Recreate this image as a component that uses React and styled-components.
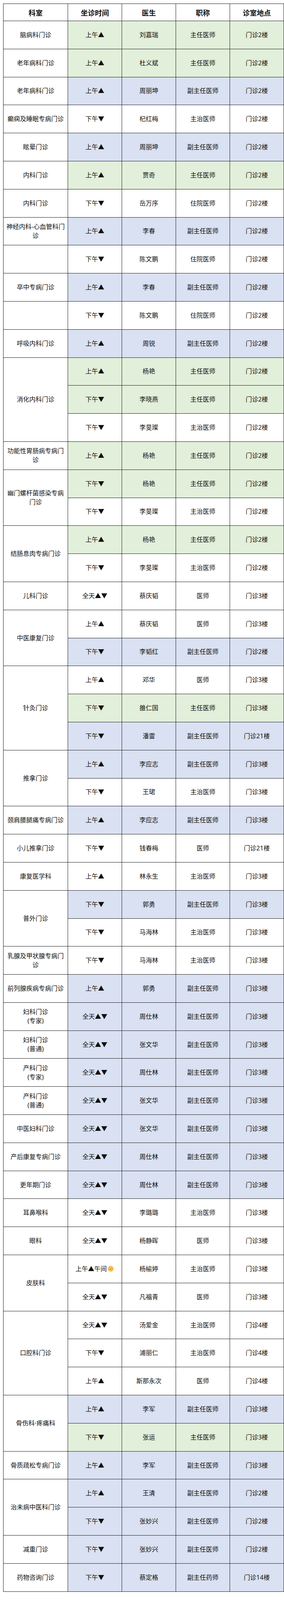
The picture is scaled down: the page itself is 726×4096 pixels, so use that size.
import React from 'react';
import styled, { createGlobalStyle } from 'styled-components';

const GlobalStyle = createGlobalStyle`
  html, body {
    margin: 0;
    padding: 0;
    background: #fff;
  }
  body {
    font-family: "Noto Sans", "Noto Sans CJK SC", sans-serif;
    color: #111;
  }
`;

const tones = {
  g: '#e2efda',
  b: '#d9e1f2',
  w: '#ffffff',
};

const Page = styled.div`
  padding: 9px 6px 0 8px;
`;

const Table = styled.table`
  width: 712px;
  border-collapse: collapse;
  table-layout: fixed;
  border: 1px solid #1c1c1c;
`;

const HeadRow = styled.tr`
  height: 44px;
`;

const Row = styled.tr`
  height: 71.8px;
`;

const HeadCell = styled.th`
  width: ${p => p.$w}px;
  padding: 0;
  border: 1px solid #1c1c1c;
  font-size: 18px;
  font-weight: 700;
  text-align: center;
  vertical-align: middle;
  background: #fff;
`;

const Cell = styled.td`
  padding: 0 3px;
  border: 1px solid #1c1c1c;
  background: ${p => tones[p.$tone || 'w']};
  font-size: 16px;
  line-height: 23px;
  text-align: center;
  vertical-align: middle;
  white-space: pre-line;
  color: #111;
`;

const TimeText = styled.span`
  display: inline-flex;
  align-items: center;
  white-space: nowrap;
`;

const SunFace = () => (
  <svg width="18" height="18" viewBox="0 0 36 36" style={{ marginLeft: 1 }}>
    <g fill="#f4900c">
      {Array.from({ length: 12 }).map((_, i) => (
        <polygon
          key={i}
          points="18,1 21,8 15,8"
          transform={`rotate(${i * 30} 18 18)`}
        />
      ))}
    </g>
    <circle cx="18" cy="18" r="11" fill="#ffcc4d" stroke="#f4900c" strokeWidth="1.2" />
    <circle cx="14.2" cy="16" r="1.4" fill="#664500" />
    <circle cx="21.8" cy="16" r="1.4" fill="#664500" />
    <path d="M13.5 20.5 Q18 25 22.5 20.5" stroke="#664500" strokeWidth="1.5" fill="none" />
  </svg>
);

const AM = '上午▲';
const PM = '下午▼';
const ALL = '全天▲▼';
const F2 = '门诊2楼';
const F3 = '门诊3楼';
const F4 = '门诊4楼';
const ZR = '主任医师';
const FZ = '副主任医师';
const ZZ = '主治医师';
const ZY = '住院医师';
const YS = '医师';

const groups = [
  ['脑病科门诊', [[AM, '刘嘉瑞', ZR, F2, 'g']]],
  ['老年病科门诊', [[AM, '杜义斌', ZR, F2, 'g']]],
  ['老年病科门诊', [[AM, '周丽坤', FZ, F2, 'b']]],
  ['癫痫及睡眠专病门诊', [[PM, '杞红梅', ZZ, F2, 'w']]],
  ['眩晕门诊', [[AM, '周丽坤', FZ, F2, 'b']]],
  ['内科门诊', [[AM, '贾奇', ZR, F2, 'g']]],
  ['内科门诊', [[PM, '岳万序', ZY, F2, 'w']]],
  ['神经内科-心血管科门诊', [[AM, '李春', FZ, F2, 'b']]],
  ['', [[PM, '陈文鹏', ZY, F2, 'w']]],
  ['卒中专病门诊', [[AM, '李春', FZ, F2, 'b']]],
  ['', [[PM, '陈文鹏', ZY, F2, 'w']]],
  ['呼吸内科门诊', [[AM, '周锐', FZ, F2, 'b']]],
  ['消化内科门诊', [
    [AM, '杨艳', ZR, F2, 'g'],
    [PM, '李晓燕', ZR, F2, 'g'],
    [PM, '李旻璨', ZZ, F2, 'w'],
  ]],
  ['功能性胃肠病专病门诊', [[AM, '杨艳', ZR, F2, 'g']]],
  ['幽门螺杆菌感染专病门诊', [
    [PM, '杨艳', ZR, F2, 'g'],
    [PM, '李旻璨', ZZ, F2, 'w'],
  ]],
  ['结肠息肉专病门诊', [
    [AM, '杨艳', ZR, F2, 'g'],
    [PM, '李旻璨', ZZ, F2, 'w'],
  ]],
  ['儿科门诊', [[ALL, '蔡庆韬', YS, F3, 'w']]],
  ['中医康复门诊', [
    [AM, '蔡庆韬', YS, F3, 'w'],
    [PM, '李韬红', FZ, F2, 'b'],
  ]],
  ['针灸门诊', [
    [AM, '邓华', YS, F3, 'w'],
    [PM, '雒仁国', ZR, F3, 'g'],
    [PM, '潘雷', FZ, '门诊21楼', 'b'],
  ]],
  ['推拿门诊', [
    [AM, '李应志', FZ, F3, 'b'],
    [PM, '王珺', ZZ, F3, 'w'],
  ]],
  ['颈肩腰腿痛专病门诊', [[AM, '李应志', FZ, F3, 'b']]],
  ['小儿推拿门诊', [[PM, '钱春梅', YS, '门诊21楼', 'w']]],
  ['康复医学科', [[AM, '林永生', ZZ, F3, 'w']]],
  ['普外门诊', [
    [PM, '郭勇', FZ, F3, 'b'],
    [PM, '马海林', ZZ, F3, 'w'],
  ]],
  ['乳腺及甲状腺专病门诊', [[PM, '马海林', ZZ, F3, 'w']]],
  ['前列腺疾病专病门诊', [[AM, '郭勇', FZ, F3, 'b']]],
  ['妇科门诊\n(专家)', [[ALL, '周仕林', FZ, F3, 'b']]],
  ['妇科门诊\n(普通)', [[ALL, '张文华', FZ, F3, 'b']]],
  ['产科门诊\n(专家)', [[ALL, '周仕林', FZ, F3, 'b']]],
  ['产科门诊\n(普通)', [[ALL, '张文华', FZ, F3, 'b']]],
  ['中医妇科门诊', [[ALL, '张文华', FZ, F3, 'b']]],
  ['产后康复专病门诊', [[ALL, '周仕林', FZ, F3, 'b']]],
  ['更年期门诊', [[ALL, '周仕林', FZ, F3, 'b']]],
  ['耳鼻喉科', [[ALL, '李璐璐', ZZ, F3, 'w']]],
  ['眼科', [[ALL, '杨静晖', YS, F3, 'w']]],
  ['皮肤科', [
    ['SUN', '杨榆婷', ZZ, F3, 'w'],
    [ALL, '凡福青', YS, F3, 'w'],
  ]],
  ['口腔科门诊', [
    [ALL, '汤爱金', ZZ, F4, 'w'],
    [PM, '浦丽仁', ZZ, F4, 'w'],
    [AM, '斯那永次', YS, F4, 'w'],
  ]],
  ['骨伤科·疼痛科', [
    [AM, '李军', FZ, F3, 'b'],
    [PM, '张运', ZR, F3, 'g'],
  ]],
  ['骨质疏松专病门诊', [[AM, '李军', FZ, F3, 'b']]],
  ['治未病中医科门诊', [
    [AM, '王清', FZ, F2, 'b'],
    [PM, '张妙兴', FZ, F2, 'b'],
  ]],
  ['减重门诊', [[PM, '张妙兴', FZ, F2, 'b']]],
  ['药物咨询门诊', [[PM, '蔡定格', '副主任药师', '门诊14楼', 'b']]],
];

const headers = [
  ['科室', 164],
  ['坐诊时间', 137],
  ['医生', 137],
  ['职称', 137],
  ['诊室地点', 137],
];

const TimeCell = ({ value, tone }) => (
  <Cell $tone={tone}>
    {value === 'SUN' ? (
      <TimeText>
        上午▲午间
        <SunFace />
      </TimeText>
    ) : (
      value
    )}
  </Cell>
);

const App = () => (
  <Page>
    <GlobalStyle />
    <Table>
      <thead>
        <HeadRow>
          {headers.map(([label, w]) => (
            <HeadCell key={label} $w={w}>
              {label}
            </HeadCell>
          ))}
        </HeadRow>
      </thead>
      <tbody>
        {groups.map(([dept, lines], gi) =>
          lines.map(([time, doctor, title, place, tone], li) => (
            <Row key={`${gi}-${li}`}>
              {li === 0 && <Cell rowSpan={lines.length}>{dept}</Cell>}
              <TimeCell value={time} tone={tone} />
              <Cell $tone={tone}>{doctor}</Cell>
              <Cell $tone={tone}>{title}</Cell>
              <Cell $tone={tone}>{place}</Cell>
            </Row>
          ))
        )}
      </tbody>
    </Table>
  </Page>
);

export default App;
